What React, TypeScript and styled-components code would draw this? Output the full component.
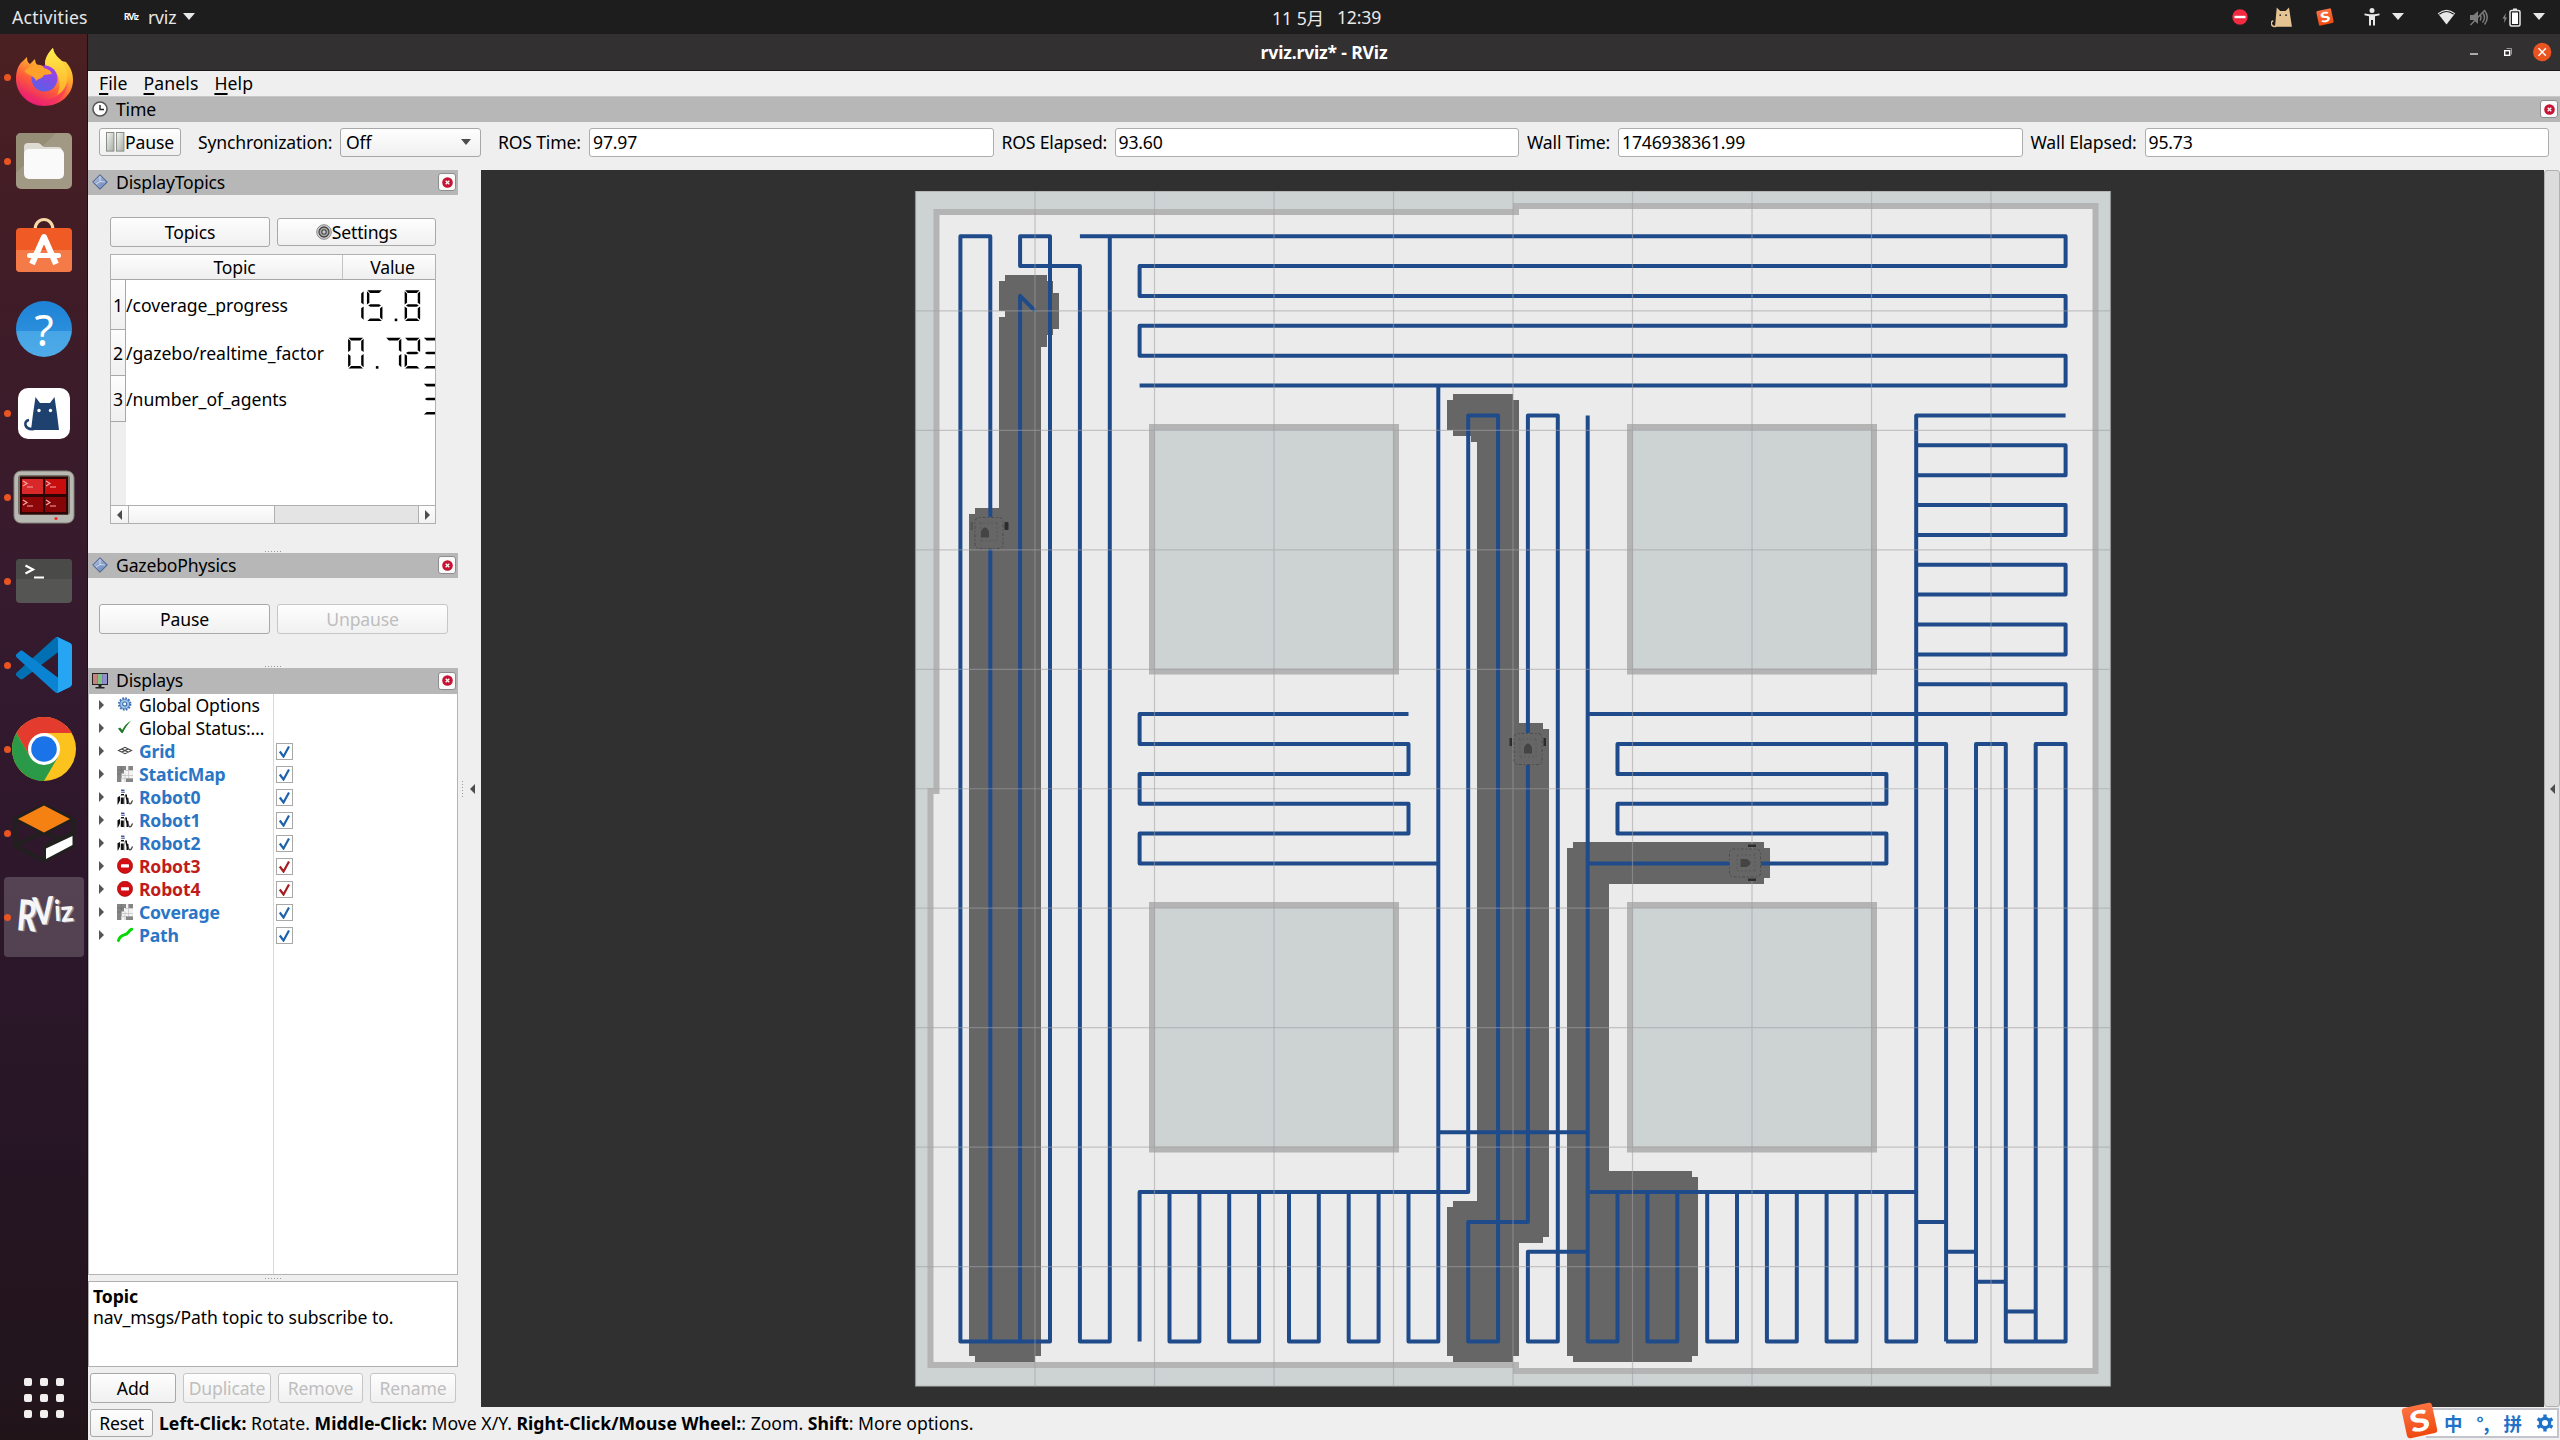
import React from "react";
import styled, { createGlobalStyle } from "styled-components";

const Global = createGlobalStyle`
  html, body { margin: 0; padding: 0; background: #303030; }
  #root { width: 2560px; height: 1440px; overflow: hidden; }
  * { box-sizing: border-box; }
  body {
    font-family: "Noto Sans", "Noto Sans CJK SC", sans-serif;
    font-size: 17.6px; letter-spacing: -0.18px; color: #000; white-space: nowrap;
  }
  svg { display: block; flex: none; }
`;

/* ---------- shell ---------- */
const Screen = styled.div`
  width: 2560px; height: 1440px; display: flex; flex-direction: column;
`;
const TopBar = styled.header`
  height: 34px; background: #1d1d1d; color: #e8e8e8; display: grid;
  grid-template-columns: 1240px 1fr 1146px; align-items: center;
`;
const TopLeft = styled.div`
  display: flex; align-items: center; padding-left: 12px; height: 34px;
`;
const Activities = styled.span`width: 112px; letter-spacing: 0.25px;`;
const AppName = styled.span`margin: 0 7px 0 7px; width: 28px;`;
const Clock = styled.div`
  padding-left: 32px; display: flex; gap: 13px; word-spacing: 0.5px;
`;
const Tray = styled.div`
  display: flex; align-items: center; justify-content: flex-end; padding-right: 15px; height: 34px;
`;
const TrayItem = styled.span<{ $gap: number }>`
  margin-right: ${(p) => p.$gap}px; display: flex;
`;
const Main = styled.div`flex: 1; display: flex; min-height: 0;`;

/* ---------- launcher ---------- */
const Dock = styled.nav`
  width: 88px; padding-top: 1px; display: flex; flex-direction: column;
  background: linear-gradient(180deg, #4b2022 0%, #3f1c27 18%, #351a2e 42%, #2d172b 62%, #251523 82%, #211419 100%);
  border-right: 1px solid #1c1016;
`;
const DockItem = styled.div<{ $active?: boolean }>`
  height: 84px; display: flex; align-items: center; padding-left: 4px;
  > div {
    width: 80px; height: 80px; display: flex; align-items: center; border-radius: 4px;
    background: ${(p) => (p.$active ? "rgba(255,255,255,.19)" : "transparent")};
  }
`;
const Dot = styled.i<{ $on?: boolean }>`
  width: 7px; height: 7px; border-radius: 50%; flex: none;
  background: ${(p) => (p.$on ? "#e95420" : "transparent")};
`;
const IconSlot = styled.span`
  width: 66px; display: flex; justify-content: center; flex: none;
`;
const AppsGrid = styled.div`
  margin: auto 0 22px 24px; display: grid; grid-template-columns: repeat(3, 8px); gap: 8px;
  i { height: 8px; border-radius: 2px; background: #f2f0ee; }
`;

/* ---------- window ---------- */
const Window = styled.section`
  flex: 1; display: flex; flex-direction: column; background: #efefef; min-width: 0;
`;
const TitleBar = styled.div`
  height: 37px; background: #323031; color: #fff; font-weight: 700; border-bottom: 1px solid #1b191a;
  display: grid; grid-template-columns: 1170px 1fr 1170px; align-items: center; text-align: center;
`;
const WinButtons = styled.div`
  display: flex; align-items: center; justify-content: flex-end; padding-right: 8px;
`;
const MenuBar = styled.div`
  height: 26px; display: flex; align-items: center; padding: 0 0 2px 11px; border-bottom: 1px solid #c8c8c8;
  gap: 16px; letter-spacing: 0.1px;
  u { text-underline-offset: 3px; text-decoration-thickness: 2px; text-decoration-skip-ink: none; }
`;
const PanelHead = styled.div<{ $h?: number }>`
  height: ${(p) => p.$h ?? 25}px; background: #b7b7b7; display: flex; align-items: center;
  padding: 0 2px 1px 4px; flex: none;
  > span { flex: 1; padding: 0 0 1px 8px; }
`;
const CloseBox = styled.b`
  width: 18px; height: 18px; border: 1px solid #8d8d8d; border-radius: 3px; background: #fafafa;
  display: flex; align-items: center; justify-content: center;
`;
const Button = styled.div<{ $w: number; $h?: number; $off?: boolean }>`
  width: ${(p) => p.$w}px; height: ${(p) => p.$h ?? 29}px; border-radius: 3px;
  border: 1px solid ${(p) => (p.$off ? "#c6c6c6" : "#a8a8a8")};
  background: linear-gradient(#fefefe, #f0f0f0);
  color: ${(p) => (p.$off ? "#bebebe" : "#000")};
  display: flex; align-items: center; justify-content: center; flex: none;
`;
const TimeRow = styled.div`
  height: 48px; padding: 6px 11px 0 11px; display: flex; align-items: flex-start;
`;
const Field = styled.label<{ $w: number; $gap: number }>`
  width: ${(p) => p.$w}px; height: 29px; line-height: 28px; margin-left: ${(p) => p.$gap}px; flex: none;
`;
const Input = styled.div`
  flex: 1; height: 29px; line-height: 27px; padding-left: 3px; background: #fff;
  border: 1px solid #adadad; border-radius: 3px;
`;
const Combo = styled.div`
  width: 141px; height: 29px; padding: 0 9px 1px 5px; border: 1px solid #a8a8a8; border-radius: 3px;
  background: linear-gradient(#fefefe, #f0f0f0); display: flex; align-items: center; justify-content: space-between;
`;
const Body = styled.div`flex: 1; display: flex; min-height: 0;`;
const Side = styled.aside`width: 370px; display: flex; flex-direction: column;`;
const Handle = styled.div<{ $h?: number }>`
  height: ${(p) => p.$h ?? 4}px; display: flex; align-items: center; justify-content: center; gap: 2px; flex: none;
  i { width: 1px; height: 1px; background: #999; }
`;
const Gutter = styled.div`
  width: 23px; display: flex; align-items: center; padding-left: 4px; gap: 7px;
`;
const VDots = styled.span`
  display: flex; flex-direction: column; gap: 2px;
  i { width: 1px; height: 1px; background: #999; }
`;
const RightGutter = styled.div`
  width: 16px; display: flex; align-items: center; justify-content: center;
  background: #dcdcdc; border: 1px solid #b0b0b0; border-radius: 3px;
`;
const Canvas = styled.div`flex: 1; background: #303030; overflow: hidden;`;

/* ---------- topic table ---------- */
const TopicsPanel = styled.div`height: 354px; padding: 22px 22px 0; flex: none;`;
const ButtonRow = styled.div<{ $gap: number }>`
  display: flex; align-items: center; gap: ${(p) => p.$gap}px;
`;
const Table = styled.div`
  margin-top: 7px; width: 326px; height: 270px; border: 1px solid #b0b0b0; background: #fff;
  display: flex; flex-direction: column;
`;
const HeadRow = styled.div`
  height: 25px; display: grid; grid-template-columns: 231px 93px; align-items: center; text-align: center;
  background: linear-gradient(#fdfdfd, #efefef); border-bottom: 1px solid #a8a8a8;
  > span { line-height: 24px; height: 24px; padding-left: 16px; }
  > span:last-child { border-left: 1px solid #c4c4c4; padding-left: 7px; }
`;
const Rows = styled.div`flex: 1; background: linear-gradient(90deg, #efefef 15px, #fff 15px);`;
const TopicRow = styled.div<{ $h: number }>`
  height: ${(p) => p.$h}px; display: grid; grid-template-columns: 15px 216px 1fr; align-items: center; overflow: hidden;
  letter-spacing: -0.02px;
`;
const RowNo = styled.span`
  height: 100%; display: flex; align-items: center; justify-content: flex-end; padding-right: 2px;
  border-right: 1px solid #a8a8a8; border-bottom: 1px solid #a8a8a8; background: linear-gradient(#fdfdfd, #f0f0f0);
`;
const HScroll = styled.div`
  height: 18px; border-top: 1px solid #b0b0b0; display: grid;
  grid-template-columns: 17px 146px 1fr 17px; background: #e4e4e4;
  > span { display: flex; align-items: center; justify-content: center; background: linear-gradient(#fdfdfd, #f2f2f2); }
  > * + * { border-left: 1px solid #b0b0b0; }
`;
const PhysicsPanel = styled.div`height: 86px; padding: 26px 11px 0; flex: none;`;

/* ---------- displays tree ---------- */
const Tree = styled.div`
  height: 581px; border: 1px solid #b4b4b4; border-top: 0; flex: none;
  background: linear-gradient(90deg, #fff 184px, #d8d8d8 184px, #d8d8d8 185px, #fff 185px);
  > div:first-child { margin-top: -1px; }
`;
const TreeRow = styled.div<{ $tone: string }>`
  height: 23px; display: grid; grid-template-columns: 28px 22px 137px 18px; align-items: center;
  color: ${(p) => p.$tone}; font-weight: ${(p) => (p.$tone === "#000" ? 400 : 700)};
`;
const Expander = styled.i`
  margin-left: 10px; border-left: 5px solid #555; border-top: 5px solid transparent; border-bottom: 5px solid transparent; width: 0;
`;
const Check = styled.i`
  width: 17px; height: 17px; border: 1px solid #a8a8a8; background: #fff; display: flex; align-items: center; justify-content: center;
`;
const HelpBox = styled.div`
  height: 86px; background: #fff; border: 1px solid #b0b0b0; padding: 4px 4px; line-height: 21px; flex: none;
  letter-spacing: -0.08px;
`;
const Actions = styled.div`
  display: flex; gap: 7px; padding: 6px 0 0 2px;
`;
const StatusBar = styled.footer`
  height: 33px; display: flex; align-items: center; padding: 0 0 1px 2px; gap: 6px;
`;
const Hint = styled.span`flex: 1; letter-spacing: 0.02px;`;
const ImeWrap = styled.div`display: flex; align-items: center; padding-right: 1px;`;
const ImeBar = styled.div`
  width: 133px; height: 30px; border: 2px solid #c4c4cc; border-left: 0; background: #fff;
  display: flex; align-items: center; color: #1e73c8; font: 700 18.5px "Noto Sans CJK SC", sans-serif;
  padding-left: 18px; margin-left: -12px; gap: 14px;
`;
const ImeLogo = styled.div`position: relative; z-index: 1; margin-top: -6px;`;

/* ---------- small glyphs ---------- */
const Down = ({ c = "#e8e8e8", w = 12 }: { c?: string; w?: number }) => (
  <svg width={w} height={w * 0.6} viewBox="0 0 12 7"><path d="M0 0h12L6 7z" fill={c} /></svg>
);
const Tri = ({ dir }: { dir: "l" | "r" }) => (
  <svg width="5" height="10" viewBox="0 0 5 10">
    <path d={dir === "l" ? "M5 0v10L0 5z" : "M0 0v10l5-5z"} fill="#4c4c4c" />
  </svg>
);
const CloseMark = () => (
  <CloseBox>
    <svg width="11" height="11" viewBox="0 0 11 11">
      <circle cx="5.5" cy="5.5" r="5.3" fill="#c81232" />
      <path d="M3.7 3.7l3.6 3.6M7.3 3.7L3.7 7.3" stroke="#fff" strokeWidth="1.3" />
    </svg>
  </CloseBox>
);
const Diamond = () => (
  <svg width="16" height="16" viewBox="0 0 16 16">
    <defs>
      <linearGradient id="dm" x1="0" y1="0" x2="1" y2="1">
        <stop offset="0" stopColor="#b9c6e2" /><stop offset="1" stopColor="#5f7db4" />
      </linearGradient>
    </defs>
    <path d="M8 .7L15.3 8 8 15.3.7 8z" fill="url(#dm)" stroke="#3f5688" strokeWidth="1" />
    <path d="M8 2.5v5L4 10M8 7.5l5 .5" stroke="#dfe6f4" strokeWidth=".8" fill="none" />
  </svg>
);
const ClockIcon = () => (
  <svg width="16" height="16" viewBox="0 0 16 16">
    <circle cx="8" cy="8" r="7" fill="#fff" stroke="#555" strokeWidth="1.6" />
    <path d="M8 4v4.500h4" stroke="#222" strokeWidth="1.4" fill="none" />
  </svg>
);
const ScreenIcon = () => (
  <svg width="16" height="16" viewBox="0 0 16 16">
    <rect x="0" y="0" width="16" height="12" fill="#222" />
    <rect x="1" y="1" width="4.800" height="10" fill="#c98080" />
    <rect x="5.800" y="1" width="4.400" height="10" fill="#80c080" />
    <rect x="10.200" y="1" width="4.800" height="10" fill="#9090d0" />
    <path d="M6.500 12h3v2h3v1.600h-9V14h3z" fill="#222" />
  </svg>
);
const PauseIcon = () => (
  <svg width="19" height="20" viewBox="0 0 19 20">
    <defs>
      <linearGradient id="pz" x1="0" y1="0" x2="1" y2="1">
        <stop offset="0" stopColor="#f4f6f2" /><stop offset="1" stopColor="#a9ada5" />
      </linearGradient>
    </defs>
    <rect x=".5" y=".5" width="7.400" height="18.600" fill="url(#pz)" stroke="#8b8e88" />
    <rect x="10.500" y=".5" width="7.400" height="18.600" fill="url(#pz)" stroke="#8b8e88" />
  </svg>
);
const TargetIcon = () => (
  <svg width="16" height="16" viewBox="0 0 16 16">
    <circle cx="8" cy="8" r="7.300" fill="#d4d4d4" stroke="#8a8a8a" />
    <circle cx="8" cy="8" r="5" fill="#a8a8a8" stroke="#444" strokeWidth="1.300" />
    <circle cx="8" cy="8" r="2.200" fill="#ccc" stroke="#444" strokeWidth="1.100" />
  </svg>
);

/* seven segment readout */
const SEG: Record<string, string> = {
  "0": "abcdef", "1": "bc", "2": "abged", "3": "abgcd", "5": "afgcd", "7": "abc", "8": "abcdefg",
};
const SEG_D: Record<string, string> = {
  a: "M.5 .3h14.5l-2.7 2.6H3.2z",
  b: "M15.6 1.2v13.2l-2.400-1.600V3.600z",
  c: "M15.6 16.6v13.2l-2.400-2.400v-9.200z",
  d: "M.5 31h14.5l-2.700-2.600H3.200z",
  e: "M.1 16.6v13.2l2.400-2.400v-9.200z",
  f: "M.1 1.2v13.2l2.400-1.600V3.600z",
  g: "M1.4 15.5l2-1.300h8.800l2 1.300-2 1.300H3.400z",
};
const Lcd = ({ cells, h, top }: { cells: string; h: number; top: number }) => (
  <svg width="93" height={h} viewBox={`0 0 93 ${h}`}>
    {cells.split("").map((c, i) => (
      <g key={i} transform={`translate(${6 + i * 18.85} ${top})`}>
        {c === "." ? <rect x="9" y="28.600" width="2.600" height="2.600" /> :
          (SEG[c] || "").split("").map((s) => <path key={s} d={SEG_D[s]} />)}
      </g>
    ))}
  </svg>
);

/* tree icons */
const TreeIcon = ({ kind }: { kind: string }) => {
  if (kind === "gear")
    return (
      <svg width="16" height="16" viewBox="0 0 16 16">
        <circle cx="7.700" cy="7" r="5.600" fill="none" stroke="#3d70b0" strokeWidth="2.200" strokeDasharray="1.700 1.220" />
        <circle cx="7.700" cy="7" r="4.900" fill="#9fc0e6" stroke="#4a7dbd" strokeWidth="1" />
        <circle cx="7.700" cy="7" r="2" fill="#fff" stroke="#3d70b0" strokeWidth="1.200" />
      </svg>
    );
  if (kind === "ok")
    return (
      <svg width="16" height="16" viewBox="0 0 16 16">
        <path d="M1 8.600l2.200-1.200 2 2.700C7.500 6 10 3 14.200.6 10.500 4.500 8 8.500 5.600 13.200 4 13.200 2.600 10.500 1 8.600z" fill="#1c7a26" />
      </svg>
    );
  if (kind === "grid")
    return (
      <svg width="16" height="16" viewBox="0 0 16 16">
        <path d="M1.500 7.500L8 4.300l6.500 3.200L8 10.700zM4.700 5.900l6.500 3.200M11.200 5.900L4.700 9.100" fill="none" stroke="#444" strokeWidth="1.100" />
      </svg>
    );
  if (kind === "map")
    return (
      <svg width="16" height="16" viewBox="0 0 16 16">
        <rect width="16" height="16" fill="#f3f3f3" />
        <path d="M4.500 7.500v8.500M8 7.500v8.500M11.500 0v16M4.500 9.500H16M4.500 12.500H16M8 4.500h8" stroke="#c4c4c4" strokeWidth=".8" />
        <path d="M0 0h9v4H7v3.500H4.500V12H4v4H0zM11.500 0H16v4h-4.500zM9 12.500h7V16H9z" fill="#858585" />
        <path d="M0 4h7M4.300 0v7M0 8h4" stroke="#6e6e6e" strokeWidth=".8" />
      </svg>
    );
  if (kind === "robot")
    return (
      <svg width="16" height="16" viewBox="0 0 16 16">
        <rect x="4" y=".6" width="3.500" height="1.300" fill="#2b3f8c" />
        <rect x="4.200" y="2.600" width="3.600" height="1.400" fill="#6a78a8" />
        <path d="M4 5h3v1.500H4zM.5 8.200L3 7v4.500L1 15.500H.5v-3zM3.800 8.500h3V15h-3zM8 5.500h2v2.700l1.500 1V15H9.500v-3z" fill="#111" />
        <path d="M11 12c1 0 0 2.800 2 2.800s1.500-2.500 2.600-3.300" stroke="#444" strokeWidth="1.300" fill="none" />
        <path d="M3.500 6.500h4v9" stroke="#999" strokeWidth=".7" fill="none" />
      </svg>
    );
  if (kind === "error")
    return (
      <svg width="16" height="16" viewBox="0 0 16 16">
        <circle cx="8" cy="7.800" r="7.600" fill="#d30f13" stroke="#9d0a0c" strokeWidth=".7" />
        <rect x="4" y="6.200" width="8" height="3.200" rx=".6" fill="#fff" />
      </svg>
    );
  return (
    <svg width="16" height="16" viewBox="0 0 16 16">
      <path d="M1.500 13.500C3 7.500 7 8.500 9.500 7S12.500 2.500 14.800 2.200" stroke="#06d806" strokeWidth="3" fill="none" strokeLinecap="round" />
    </svg>
  );
};

/* ---------- dock icons ---------- */
const Firefox = () => (
  <svg width="58" height="60" viewBox="0 0 58 60">
    <defs>
      <linearGradient id="ff1" x1=".8" y1="0" x2=".3" y2="1">
        <stop offset="0" stopColor="#ffe94a" /><stop offset=".35" stopColor="#ffb52e" />
        <stop offset=".65" stopColor="#ff5c3a" /><stop offset="1" stopColor="#e3137a" />
      </linearGradient>
      <linearGradient id="ff2" x1=".7" y1="0" x2=".3" y2="1">
        <stop offset="0" stopColor="#a33de8" /><stop offset="1" stopColor="#5a5fe6" />
      </linearGradient>
      <linearGradient id="ff3" x1="0" y1="0" x2="0" y2="1">
        <stop offset="0" stopColor="#fff04d" /><stop offset="1" stopColor="#ffab28" />
      </linearGradient>
    </defs>
    <path d="M12 10c0 4 1 6 3 7l5-5c0 4 2 6 4 7h6C30 11 34 5 38 1c1 7 5 9 9 13l4 1c5 6 7 11 7 18 0 15-13 26-29 26S1 46 1 32c0-9 3-15 7-18z" fill="url(#ff1)" />
    <path d="M30 17C30 10 34 5 38 1c1 8 8 11 12 18 5 10 2 24-8 29 4-7 4-19-4-25z" fill="url(#ff3)" />
    <circle cx="29.500" cy="31.500" r="13" fill="url(#ff2)" />
    <path d="M17 19c6-2 10-2 12 2 3 1 7 2 8 6l-8 1c-2 4-5 3-8 6-1-5-7-5-12-10 2-2 5-3 8-5z" fill="#ffa12b" />
    <path d="M4 24c-3 20 12 31 26 29 12-1 20-9 23-18-2 15-12 23-24 23C12 58 1 46 4 24z" fill="#f5286e" opacity=".5" />
  </svg>
);
const Files = () => (
  <svg width="56" height="56" viewBox="0 0 56 56">
    <rect width="56" height="56" rx="5" fill="#a29985" />
    <path d="M0 40L40 0H5a5 5 0 00-5 5z" fill="#968d77" />
    <path d="M8 14a4 4 0 014-4h10c3 0 4 4 7 4h13a4 4 0 014 4v8H8z" fill="#dedbd2" />
    <rect x="8" y="16" width="40" height="30" rx="5" fill="#fafafa" />
  </svg>
);
const Store = () => (
  <svg width="56" height="54" viewBox="0 0 56 54">
    <path d="M19 12c0-14 18-14 18 0" stroke="#f8d9a8" strokeWidth="3" fill="none" />
    <rect y="10" width="56" height="44" rx="4" fill="#f05b25" />
    <path d="M0 32h56v18a4 4 0 01-4 4H4a4 4 0 01-4-4z" fill="#f47a48" />
    <path d="M16 46L28 19l12 27" stroke="#fff" strokeWidth="6" fill="none" strokeLinejoin="round" />
    <path d="M13.500 37.500h29" stroke="#fff" strokeWidth="5" strokeLinecap="round" />
  </svg>
);
const Question = styled.span`
  width: 56px; height: 56px; border-radius: 50%; color: #fff;
  background: linear-gradient(#1e83d6 0, #2a8edc 54%, #46a5e6 54%, #4fabe8 100%);
  display: flex; align-items: center; justify-content: center; font: 400 44px "Noto Sans", sans-serif;
`;
const CatTile = () => (
  <svg width="52" height="51" viewBox="0 0 52 51">
    <rect width="52" height="51" rx="10" fill="#fff" />
    <path d="M17.500 9l4.500 6h10l4.500-6L39 26l2 16H13l2-16z" fill="#1f4170" />
    <path d="M16 41c-10 1-11-8-5-9" stroke="#1f4170" strokeWidth="2.600" fill="none" />
    <circle cx="21" cy="22.500" r="1.700" fill="#fff" /><circle cx="32.500" cy="22.500" r="1.700" fill="#fff" />
  </svg>
);
const TrayCat = () => (
  <svg width="22" height="21" viewBox="8 8 36 36">
    <path d="M17 9l6 6h9l6-6 5 33H14z" fill="#e6c492" />
    <path d="M16 41c-10 2-10-9-5-9" stroke="#e6c492" strokeWidth="2.600" fill="none" />
    <circle cx="23" cy="22" r="1.600" fill="#333" /><circle cx="33" cy="22" r="1.600" fill="#333" />
  </svg>
);
const Terminator = () => (
  <svg width="62" height="54" viewBox="0 0 62 54">
    <rect x="1" y="1" width="60" height="52" rx="7" fill="#b9b9b3" stroke="#83837c" />
    <rect x="5" y="5" width="52" height="40" rx="3" fill="#77716a" />
    <rect x="7" y="6.500" width="48" height="38" fill="#2e0505" />
    <rect x="9" y="9" width="21" height="15" fill="#d8282a" /><rect x="32" y="9" width="21" height="15" fill="#c80d0f" />
    <rect x="9" y="27" width="21" height="15" fill="#8d0708" /><rect x="32" y="27" width="21" height="15" fill="#860506" />
    {[[10, 11], [33, 11], [10, 30], [33, 30]].map(([x, y]) => (
      <path key={`${x}${y}`} d={`M${x} ${y}l4 2.500-4 2.500M${x + 4} ${y + 6}h6`} stroke="#f4a8a8" strokeWidth="1.200" fill="none" />
    ))}
    <circle cx="43" cy="48.500" r="1.600" fill="#f22" />
  </svg>
);
const Terminal = () => (
  <svg width="56" height="44" viewBox="0 0 56 44">
    <rect width="56" height="44" rx="4" fill="#555554" />
    <path d="M0 20V4a4 4 0 014-4h48a4 4 0 014 4v16z" fill="#4a4a49" />
    <path d="M9.500 6.500l7.500 4-7.500 4M18 18.500h10" stroke="#fff" strokeWidth="2.200" fill="none" />
  </svg>
);
const Code = () => (
  <svg width="56" height="56" viewBox="0 0 100 100">
    <path d="M96.460 10.800L75.860.880C73.470-.270 70.620.210 68.750 2.080L1.300 63.580c-1.810 1.650-1.810 4.510 0 6.160l5.510 5.010c1.490 1.350 3.720 1.450 5.320.240L93.360 13.370C96.090 11.300 100 13.250 100 16.670v-.240c0-2.400-1.380-4.590-3.540-5.630z" fill="#0070b3" />
    <path d="M96.460 89.200L75.860 99.120c-2.390 1.150-5.240.670-7.110-1.200L1.300 36.420c-1.810-1.650-1.810-4.510 0-6.160l5.510-5.010c1.490-1.350 3.720-1.450 5.320-.240l81.230 61.620c2.730 2.070 6.640.120 6.640-3.300v.240c0 2.400-1.380 4.590-3.540 5.630z" fill="#0a84d2" />
    <path d="M75.860 99.130c-2.390 1.150-5.240.660-7.110-1.210 2.310 2.300 6.250.670 6.250-2.590V4.670C75 1.410 71.060-.220 68.750 2.080 70.620.210 73.470-.270 75.860.870l20.600 9.910c2.160 1.040 3.540 3.230 3.540 5.630v67.180c0 2.400-1.380 4.590-3.540 5.630z" fill="#26a5f2" />
  </svg>
);
const Chrome = () => (
  <svg width="64" height="64" viewBox="0 0 64 64">
    <circle cx="32" cy="32" r="32" fill="#fcc31e" />
    <path d="M4.300 16A32 32 0 0159.700 16H32L18.200 40z" fill="#e33b2e" />
    <path d="M4.300 16A32 32 0 0032 64l14-24H18.200z" fill="#2a9a48" />
    <circle cx="32" cy="32" r="16" fill="#fff" /><circle cx="32" cy="32" r="12.800" fill="#1a73e8" />
  </svg>
);
const Gazebo = () => (
  <svg width="64" height="62" viewBox="0 0 64 62">
    <path d="M32 3.500L61 17v27L32 58.500 3 44V17zM3 44l29-14.500L61 44M32 29.500V3" fill="none" stroke="#221f1f" strokeWidth="4" strokeLinejoin="round" />
    <path d="M32 3.500L61 17 32 31 3 17z" fill="#221f1f" stroke="#221f1f" strokeWidth="3" />
    <path d="M32 3.500L58 17 32 30.500 6 17z" fill="#f58113" />
    <path d="M32 42L62 28v17L32 60z" fill="#221f1f" />
    <path d="M34 46.500L60.500 34v9L34 57z" fill="#fff" />
  </svg>
);
const RvizLogo = () => (
  <svg width="76" height="76" viewBox="-7 -16 76 76">
    {[["#96909a", 1.6, 0.8], ["#f7f6f7", 0, 0]].map(([fill, dx, dy]) => (
      <g key={String(fill)} fontFamily="Lato" fontWeight="900" fill={String(fill)} transform={`translate(${dx} ${dy})`}>
        <text transform="translate(3 35) rotate(5) scale(.7 1)" fontSize="43">R</text>
        <text transform="translate(21 30) rotate(-4) scale(.78 1)" fontSize="38">V</text>
        <text transform="translate(42 26) rotate(-3) scale(.8 1)" fontSize="29">i</text>
        <text transform="translate(48.500 27) rotate(-5) scale(.95 1)" fontSize="29">z</text>
      </g>
    ))}
  </svg>
);
const SLogo = ({ s }: { s: number }) => (
  <svg width={s} height={s} viewBox="0 0 36 36">
    <defs>
      <linearGradient id="so" x1="0" y1="0" x2="0" y2="1">
        <stop offset="0" stopColor="#fb7340" /><stop offset="1" stopColor="#f0480f" />
      </linearGradient>
    </defs>
    <rect x="3" y="3" width="30" height="30" rx="3" fill="url(#so)" transform="rotate(-12 18 18)" />
    <text x="18" y="28.300" textAnchor="middle" fontFamily="Lato" fontWeight="900" fontSize="28" fill="#fff"
      transform="rotate(-12 18 18) translate(-4.500 0) scale(1.250 1)">S</text>
  </svg>
);

/* ---------- map view ---------- */
const X = (i: number) => 960.4 + 29.87 * i;
const Y = (j: number) => 236.2 + 29.87 * j;
const poly = (pts: number[][]) => "M" + pts.map(([i, j]) => `${X(i).toFixed(1)} ${Y(j).toFixed(1)}`).join("L");

const route: number[][][] = [
  [[1, 37], [1, 0], [0, 0], [0, 37], [3, 37], [3, 0], [2, 0], [2, 1], [4, 1], [4, 37], [5, 37], [5, 0]],
  [[2.5, 2.5], [2, 2], [2, 37]],
  [[4, 0], [37, 0], [37, 1], [6, 1], [6, 2], [37, 2], [37, 3], [6, 3], [6, 4], [37, 4], [37, 5], [6, 5]],
  [[15, 16], [6, 16], [6, 17], [15, 17], [15, 18], [6, 18], [6, 19], [15, 19], [15, 20], [6, 20], [6, 21], [16, 21]],
  [[16, 5], [16, 37], [15, 37], [15, 32]],
  [[6, 37], [6, 32], [17, 32], [17, 6], [18, 6], [18, 37], [17, 37], [17, 33], [19, 33], [19, 6], [20, 6], [20, 37], [19, 37], [19, 34], [21, 34]],
  [[16, 30], [21, 30]],
  [[21, 6], [21, 37]],
  [[21, 32], [32, 32]],
  [[37, 6], [32, 6], [32, 37], [31, 37], [31, 32]],
  [[21, 16], [37, 16], [37, 15], [32, 15]],
  [[33, 37], [33, 17], [22, 17], [22, 18], [31, 18], [31, 19], [22, 19], [22, 20], [31, 20], [31, 21], [21, 21]],
  [[33, 37], [34, 37], [34, 17], [35, 17], [35, 37], [37, 37], [37, 17], [36, 17], [36, 37]],
  [[32, 33], [33, 33]], [[33, 34], [34, 34]], [[34, 35], [35, 35]], [[35, 36], [36, 36]],
];
[7, 9, 11, 13].forEach((i) => route.push([[i, 32], [i, 37], [i + 1, 37], [i + 1, 32]]));
[21, 23, 25, 27, 29].forEach((i) => route.push([[i, 32], [i, 37], [i + 1, 37], [i + 1, 32]]));
[7, 9, 11, 13].forEach((j) => route.push([[32, j], [37, j], [37, j + 1], [32, j + 1]]));

const covered = [
  "M1005 275H1047V281H1053V293H1059V329H1053V335H1047V347H1041V1356H1035V1362H975V1356H969V514H975V508H999V317H1005V311H999V281H1005Z",
  "M1453 394H1513V400H1519V723H1543V729H1549V1237H1543V1243H1519V1356H1513V1362H1453V1356H1447V1207H1453V1201H1477V442H1471V436H1453V430H1447V400H1453Z",
  "M1573 842H1764V848H1770V878H1764V884H1609V1171H1692V1177H1698V1356H1692V1362H1573V1356H1567V848H1573Z",
];
const Robot = ({ x, y, r = 0, side = 0 }: { x: number; y: number; r?: number; side?: number }) => (
  <g transform={`translate(${x} ${y}) rotate(${r})`}>
    <rect x="-14" y="-16" width="28" height="32" rx="4" fill="#666" />
    <rect x="-14" y="-15.500" width="28" height="31" rx="4" fill="none" stroke="#4c4c4c" strokeWidth="1" strokeDasharray="1.500 2 3 2" />
    <path d="M-8-10v18M8-10v18M-8 8H8M-10-10H10" stroke="#555" strokeWidth=".8" strokeDasharray="2 2" fill="none" />
    <path d="M-4 4.500v-6q4-8 8 0v6z" fill="#444" transform={`translate(${side ? -4 : 0} 0)`} />
    <rect x="-18.500" y="-11" width="2.500" height="8" fill={side ? "#555" : "#2c2c2c"} />
    <rect x="15.500" y="-11" width={side ? 4 : 2.5} height="8" rx={side} fill="#2c2c2c" />
  </g>
);
const MapView = () => (
  <svg width="2063" height="1237" viewBox="481 170 2063 1237">
    <rect x="915.500" y="191" width="1195" height="1195.300" fill="#cdd3d2" />
    <path d="M933.500 209H1513V203H2098.500V1374H1513V1368H927.500V788H933.500Z" fill="#b4b4b4" />
    <path d="M939.500 215H1519V209H2092.500V1368H1519V1362H933.500V794H939.500Z" fill="#ebebeb" />
    {[[1149, 424], [1627, 424], [1149, 902], [1627, 902]].map(([x, y]) => (
      <g key={`${x}-${y}`}>
        <rect x={x} y={y} width="250" height="250.500" fill="#b4b4b4" />
        <rect x={x + 6} y={y + 6} width="238" height="238.500" fill="#cdd3d2" />
      </g>
    ))}
    {covered.map((d) => <path key={d} d={d} fill="#666" shapeRendering="crispEdges" />)}
    <path d={route.map(poly).join("")} fill="none" stroke="#1f4b8b" strokeWidth="4" strokeLinejoin="round" />
    <g stroke="#a0a0a4" strokeOpacity=".55" strokeWidth="1.200">
      {Array.from({ length: 11 }, (_, k) => (
        <path key={k} d={`M${915.5 + 119.5 * k} 191V1386.500M915.500 ${191.5 + 119.45 * k}H2110.500`} />
      ))}
    </g>
    <Robot x={989} y={533} side={1} />
    <Robot x={1528} y={749} />
    <Robot x={1745} y={863} r={90} />
  </svg>
);

/* ---------- data ---------- */
const BLUE = "#2a76c6";
const RED = "#c01c1c";
const displays: [string, string, string][] = [
  ["gear", "Global Options", "#000"], ["ok", "Global Status:…", "#000"], ["grid", "Grid", BLUE],
  ["map", "StaticMap", BLUE], ["robot", "Robot0", BLUE], ["robot", "Robot1", BLUE], ["robot", "Robot2", BLUE],
  ["error", "Robot3", RED], ["error", "Robot4", RED], ["map", "Coverage", BLUE], ["path", "Path", BLUE],
];
const topics = [
  { name: "/coverage_progress", cells: "15.8", h: 50, top: 10 },
  { name: "/gazebo/realtime_factor", cells: "0.723", h: 46, top: 7.5 },
  { name: "/number_of_agents", cells: "    3", h: 46, top: 7.5 },
];
const dock: [React.ReactNode, boolean][] = [
  [<Firefox />, true], [<Files />, true], [<Store />, false], [<Question>?</Question>, false],
  [<CatTile />, true], [<Terminator />, true], [<Terminal />, true], [<Code />, true],
  [<Chrome />, true], [<Gazebo />, true], [<RvizLogo />, true],
];
const six = [0, 1, 2, 3, 4, 5];
const Grip = ({ h }: { h?: number }) => <Handle $h={h}>{six.map((i) => <i key={i} />)}</Handle>;

export default function App() {
  return (
    <Screen>
      <Global />
      <TopBar>
        <TopLeft>
          <Activities>Activities</Activities>
          <svg width="17" height="16" viewBox="0 0 17 16">
            <text x="0" y="11" fontFamily="Lato" fontWeight="900" fontSize="8.500" fill="#fff" letterSpacing="-.8">RViz</text>
          </svg>
          <AppName>rviz</AppName>
          <Down />
        </TopLeft>
        <Clock><span>11 5月</span><span>12:39</span></Clock>
        <Tray>
          <TrayItem $gap={23}>
            <svg width="16" height="16" viewBox="0 0 16 16"><circle cx="8" cy="8" r="7.700" fill="#f42a42" /><rect x="2.500" y="6.800" width="11" height="2.400" fill="#fff" /></svg>
          </TrayItem>
          <TrayItem $gap={23}><TrayCat /></TrayItem>
          <TrayItem $gap={30}><SLogo s={18} /></TrayItem>
          <TrayItem $gap={12}>
            <svg width="16" height="18" viewBox="0 0 16 18"><circle cx="8" cy="2.600" r="2.500" fill="#e8e8e8" /><path d="M.5 5.500l5 .8h5l5-.8v1.700l-4.500 1.100V17.500H9V12H7v5.500H5V8.300L.5 7.200z" fill="#e8e8e8" /></svg>
          </TrayItem>
          <TrayItem $gap={33}><Down /></TrayItem>
          <TrayItem $gap={13}>
            <svg width="19" height="16" viewBox="0 0 19 16"><path d="M.8 4.300Q9.500-3 18.200 4.300L9.500 15.500z" fill="#e8e8e8" /><path d="M2.300 5.200Q9.500-.2 16.700 5.200" stroke="#1d1d1d" strokeWidth="1.100" fill="none" /></svg>
          </TrayItem>
          <TrayItem $gap={14}>
            <svg width="19" height="17" viewBox="0 0 19 17"><path d="M1 6h3.500L9 2v13l-4.500-4H1z" fill="#7d7d7d" /><path d="M11 5.500q2 3 0 6M13.500 3.500q4 5 0 10M15.500 1.500q5.500 7 0 14M1.500 16L16 1" stroke="#7d7d7d" strokeWidth="1.400" fill="none" /></svg>
          </TrayItem>
          <TrayItem $gap={12}>
            <svg width="19" height="19" viewBox="0 0 19 19"><path d="M4 5L.5 10.500h2L2 15l3-5.500H3z" fill="#8c8c8c" /><rect x="8" y="2.500" width="10" height="15.500" rx="1.500" fill="none" stroke="#e8e8e8" strokeWidth="1.500" /><rect x="10" y="4.500" width="6" height="11.500" fill="#fff" /><path d="M11 .5h4v2h-4z" fill="#e8e8e8" /></svg>
          </TrayItem>
          <Down />
        </Tray>
      </TopBar>
      <Main>
        <Dock>
          {dock.map(([icon, on], i) => (
            <DockItem key={i} $active={i === dock.length - 1}>
              <div><Dot $on={on} /><IconSlot>{icon}</IconSlot></div>
            </DockItem>
          ))}
          <AppsGrid>{Array.from({ length: 9 }, (_, i) => <i key={i} />)}</AppsGrid>
        </Dock>
        <Window>
          <TitleBar>
            <span />
            <span>rviz.rviz* - RViz</span>
            <WinButtons>
              <svg width="82" height="20" viewBox="0 0 82 20">
                <path d="M0 12h8" stroke="#fff" strokeWidth="1.200" />
                <path d="M36.500 6.500h5v6" stroke="#999" fill="none" />
                <rect x="34.700" y="8.700" width="5" height="4.600" fill="none" stroke="#fff" strokeWidth="1.400" />
                <circle cx="72.200" cy="10" r="9.200" fill="#e95420" />
                <path d="M68.500 6.300l7.400 7.400M75.900 6.300l-7.400 7.400" stroke="#fff" strokeWidth="1.500" />
              </svg>
            </WinButtons>
          </TitleBar>
          <MenuBar>
            <span><u>F</u>ile</span><span><u>P</u>anels</span><span><u>H</u>elp</span>
          </MenuBar>
          <PanelHead><ClockIcon /><span>Time</span><CloseMark /></PanelHead>
          <TimeRow>
            <Button $w={82} $h={28}><PauseIcon />Pause</Button>
            <Field $w={142} $gap={17}>Synchronization:</Field>
            <Combo>Off<Down c="#4c4c4c" w={10} /></Combo>
            <Field $w={91} $gap={17}>ROS Time:</Field><Input>97.97</Input>
            <Field $w={113} $gap={8}>ROS Elapsed:</Field><Input>93.60</Input>
            <Field $w={91} $gap={8}>Wall Time:</Field><Input>1746938361.99</Input>
            <Field $w={114} $gap={8}>Wall Elapsed:</Field><Input>95.73</Input>
          </TimeRow>
          <Body>
            <Side>
              <PanelHead><Diamond /><span>DisplayTopics</span><CloseMark /></PanelHead>
              <TopicsPanel>
                <ButtonRow $gap={7}>
                  <Button $w={160} $h={30}>Topics</Button>
                  <Button $w={159} $h={28}><TargetIcon />Settings</Button>
                </ButtonRow>
                <Table>
                  <HeadRow><span>Topic</span><span>Value</span></HeadRow>
                  <Rows>
                    {topics.map((t, i) => (
                      <TopicRow key={t.name} $h={t.h}>
                        <RowNo>{i + 1}</RowNo><span>{t.name}</span><Lcd cells={t.cells} h={t.h} top={t.top} />
                      </TopicRow>
                    ))}
                  </Rows>
                  <HScroll><span><Tri dir="l" /></span><span /><em /><span><Tri dir="r" /></span></HScroll>
                </Table>
              </TopicsPanel>
              <Grip />
              <PanelHead><Diamond /><span>GazeboPhysics</span><CloseMark /></PanelHead>
              <PhysicsPanel>
                <ButtonRow $gap={7}>
                  <Button $w={171} $h={30}>Pause</Button>
                  <Button $w={171} $h={30} $off>Unpause</Button>
                </ButtonRow>
              </PhysicsPanel>
              <Grip />
              <PanelHead $h={26}><ScreenIcon /><span>Displays</span><CloseMark /></PanelHead>
              <Tree>
                {displays.map(([kind, name, tone], i) => (
                  <TreeRow key={name} $tone={tone}>
                    <Expander /><TreeIcon kind={kind} /><span>{name}</span>
                    {i > 1 && (
                      <Check>
                        <svg width="13" height="13" viewBox="0 0 13 13">
                          <path d="M1.800 6.500l3.700 5L11 1.500" fill="none" stroke={tone === RED ? "#a51d22" : "#1f62ab"} strokeWidth="2.200" />
                        </svg>
                      </Check>
                    )}
                  </TreeRow>
                ))}
              </Tree>
              <Grip h={6} />
              <HelpBox><b>Topic</b><br />nav_msgs/Path topic to subscribe to.</HelpBox>
              <Actions>
                <Button $w={86} $h={30}>Add</Button>
                <Button $w={88} $h={30} $off>Duplicate</Button>
                <Button $w={85} $h={30} $off>Remove</Button>
                <Button $w={86} $h={30} $off>Rename</Button>
              </Actions>
            </Side>
            <Gutter><VDots>{six.map((i) => <i key={i} />)}</VDots><Tri dir="l" /></Gutter>
            <Canvas><MapView /></Canvas>
            <RightGutter><Tri dir="l" /></RightGutter>
          </Body>
          <StatusBar>
            <Button $w={63} $h={28}>Reset</Button>
            <Hint>
              <b>Left-Click:</b> Rotate. <b>Middle-Click:</b> Move X/Y. <b>Right-Click/Mouse Wheel:</b>: Zoom. <b>Shift</b>: More options.
            </Hint>
            <ImeWrap>
              <ImeLogo><SLogo s={37} /></ImeLogo>
              <ImeBar>
                <span>中</span><span>°,</span><span>拼</span>
                <svg width="18" height="18" viewBox="0 0 18 18">
                  <circle cx="9" cy="9" r="4.600" fill="none" stroke="#1e73c8" strokeWidth="3.200" />
                  <path d="M9 .5v3M9 14.500v3M1.600 4.700l2.600 1.600M13.800 11.700l2.600 1.600M1.600 13.300l2.600-1.600M13.800 6.300l2.600-1.600" stroke="#1e73c8" strokeWidth="3.400" />
                </svg>
              </ImeBar>
            </ImeWrap>
          </StatusBar>
        </Window>
      </Main>
    </Screen>
  );
}
